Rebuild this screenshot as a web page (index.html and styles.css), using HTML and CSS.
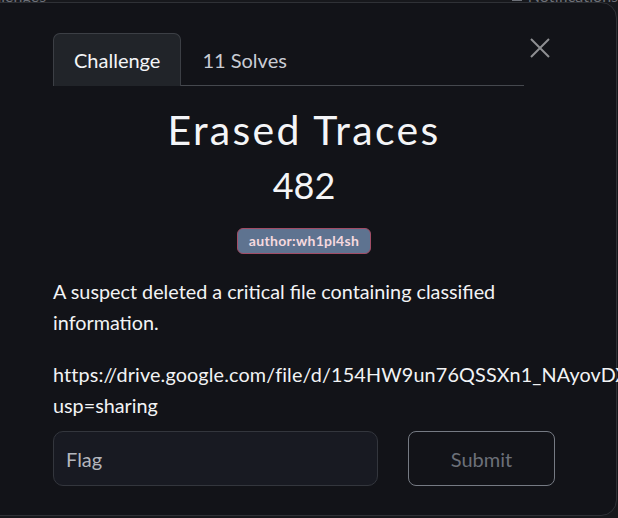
FILE: index.html
```html
<!DOCTYPE html>
<html lang="en">
<head>
<meta charset="utf-8">
<title>Erased Traces</title>
<link rel="stylesheet" href="styles.css">
</head>
<body>
<header class="topnav">
  <span class="nav-left">Challenges</span>
  <span class="nav-right"><span class="bell"></span>Notifications</span>
</header>
<div class="modal">
  <div class="modal-inner">
    <div class="head-row">
      <nav class="tabs">
        <a class="tab active">Challenge</a>
        <a class="tab">11 Solves</a>
      </nav>
      <button class="close" aria-label="Close">
        <svg width="20" height="20" viewBox="0 0 20 20"><path d="M1 1L19 19M19 1L1 19" stroke="#8e8f92" stroke-width="2" fill="none"/></svg>
      </button>
    </div>
    <h1 class="title">Erased Traces</h1>
    <div class="points">482</div>
    <div class="tags"><span class="tag">author:wh1pl4sh</span></div>
    <div class="desc">
      <p>A suspect deleted a critical file containing classified information.</p>
      <p class="link"><span class="nowrap">https://drive.google.com/file/d/154HW9un76QSSXn1_NAyovDX/view?</span><br>usp=sharing</p>
    </div>
    <form class="submit-row">
      <input class="flag" type="text" placeholder="Flag">
      <button class="submit" type="button">Submit</button>
    </form>
  </div>
</div>
</body>
</html>
```

FILE: styles.css
```css
html, body {
  margin: 0;
  padding: 0;
  height: 100%;
  overflow: hidden;
}
body {
  background: #17181c;
  font-family: Lato, "Noto Sans", sans-serif;
  color: #f2f3f5;
  position: relative;
}
.topnav {
  display: flex;
  justify-content: space-between;
  height: 20px;
  font-size: 16px;
  color: #6d7078;
  line-height: 20px;
  margin-top: -14px;
}
.nav-left { margin-left: -30px; }
.nav-right { display: flex; align-items: center; gap: 6px; }
.bell { width: 10px; height: 10px; background: #6d7078; display: inline-block; }
.modal {
  position: absolute;
  top: 2px;
  left: -30px;
  width: 647px;
  height: 514px;
  background: #121318;
  border: 1px solid #2f3136;
  border-radius: 16px;
  box-sizing: border-box;
}
.modal-inner {
  width: 502px;
  margin-left: 82px;
  padding-top: 30px;
  display: flex;
  flex-direction: column;
}
.head-row {
  display: flex;
  align-items: flex-start;
}
.tabs {
  display: flex;
  width: 472px;
  border-bottom: 1px solid #45484e;
  height: 52px;
}
.tab {
  display: block;
  height: 52px;
  box-sizing: border-box;
  padding: 0 20px;
  border: 1px solid transparent;
  border-bottom: none;
  border-radius: 7px 7px 0 0;
  font-size: 20px;
  line-height: 52px;
  color: #c9ccd4;
  margin-bottom: -1px;
}
.tab.active {
  background: #212429;
  border-color: #3c3f45;
  color: #f4f5f7;
  height: 53px;
}
.close {
  width: 30px;
  height: 30px;
  padding: 0;
  border: none;
  background: transparent;
  display: flex;
  align-items: center;
  justify-content: center;
  margin-left: 1px;
}
.title {
  margin: 20px 0 0;
  text-align: center;
  font-size: 41px;
  font-weight: 400;
  letter-spacing: 2.3px;
  line-height: 48px;
  color: #f4f5f7;
}
.points {
  margin-top: 10px;
  text-align: center;
  font-size: 36px;
  line-height: 43px;
  color: #f4f5f7;
}
.tags {
  display: flex;
  justify-content: center;
  margin-top: 21px;
  height: 26px;
}
.tag {
  display: block;
  box-sizing: border-box;
  height: 26px;
  padding: 0 11px;
  background: #5e7390;
  border: 1px solid #a24d66;
  border-radius: 6px;
  font-size: 14px;
  font-weight: 700;
  letter-spacing: 0.3px;
  line-height: 24px;
  color: #f6d9df;
}
.desc {
  margin-top: 22px;
  font-size: 19.8px;
  line-height: 31px;
  color: #f2f3f5;
}
.desc p {
  margin: 0 0 21px;
}
.desc p.link { margin-bottom: 0; }
.link .nowrap { letter-spacing: 0.15px; }
.nowrap { white-space: nowrap; }
.submit-row {
  display: flex;
  gap: 30px;
  margin-top: 10px;
}
.flag {
  width: 325px;
  height: 55px;
  box-sizing: border-box;
  background: #181a22;
  border: 1px solid #33363d;
  border-radius: 10px;
  padding: 0 12px;
  font-family: Lato, sans-serif;
  font-size: 20px;
  color: #e0e2e6;
  outline: none;
}
.flag::placeholder { color: #b3b6bd; }
.submit {
  width: 147px;
  height: 55px;
  box-sizing: border-box;
  background: transparent;
  border: 1px solid #757a83;
  border-radius: 8px;
  font-family: Lato, sans-serif;
  font-size: 20px;
  color: #6c7079;
}
```
